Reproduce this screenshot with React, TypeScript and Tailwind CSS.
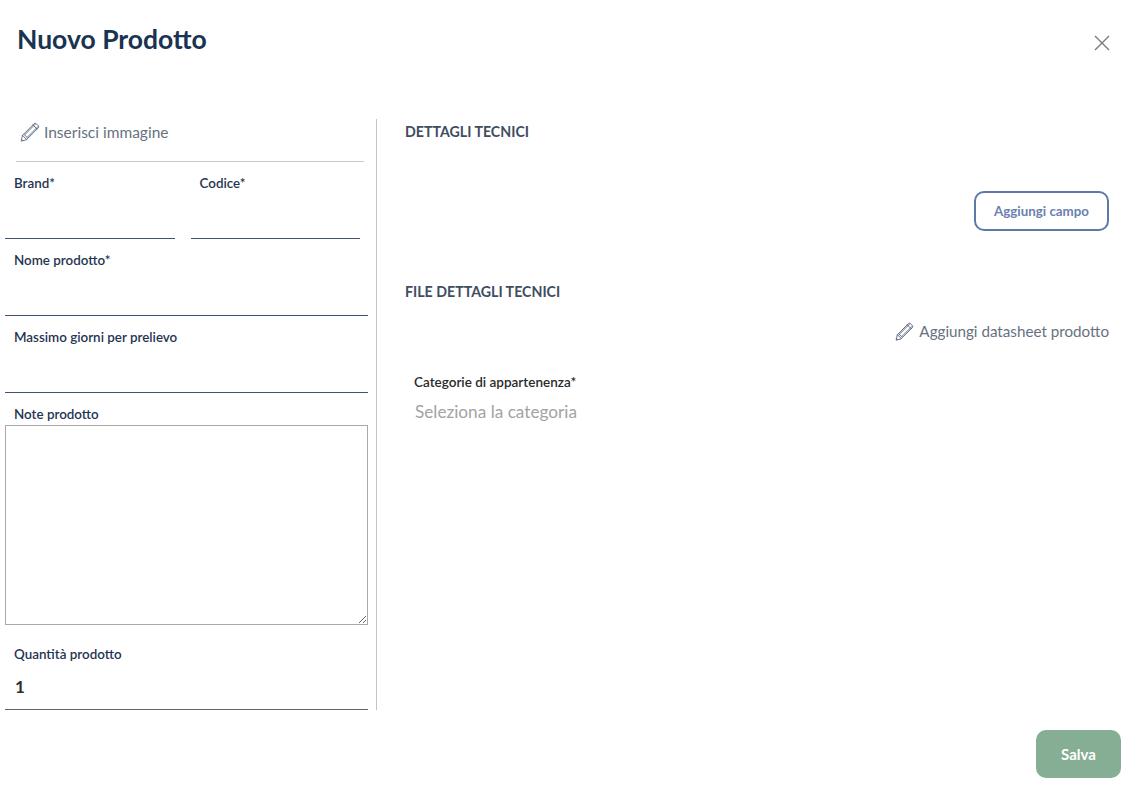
import React from "react";

function PencilIcon({ stroke = "#5d6b7d", size = 20 }: { stroke?: string; size?: number }) {
  return (
    <svg width={size} height={size} viewBox="0 0 24 24" fill="none" stroke={stroke} strokeWidth="1.1" strokeLinejoin="round" strokeLinecap="round" className="shrink-0">
      <path d="M1.5 22.5 L3 16 L17 2 Q18.2 1 19.4 2 L22 4.6 Q23 5.8 22 7 L8 21 Z" />
      <path d="M3 16 L8 21 M5.5 15.5 L8.5 18.5 M5.5 15.5 L18.6 2.4 M8.5 18.5 L21.6 5.4 M15.5 3.5 L20.5 8.5 M1.8 21 L3 22.2" />
    </svg>
  );
}

function Field({ label, className }: { label: string; className: string }) {
  return (
    <div className={className}>
      <div className="pl-[9px] h-[22px] text-[13.4px] leading-[22px] font-semibold text-[#1f3552]">{label}</div>
      <input className="block w-full h-[45px] border-b border-[#3f5270] outline-none" />
    </div>
  );
}

export default function App() {
  return (
    <div className="w-[1129px] h-[790px] bg-white overflow-hidden font-['Lato','Noto_Sans',sans-serif]">
      <header className="h-[119px] flex justify-between items-start pl-[17px] pr-[19px]">
        <h1 className="mt-[21px] text-[26.5px] leading-[36px] font-bold text-[#1a3350]">Nuovo Prodotto</h1>
        <svg className="mt-[35px]" width="16" height="16" viewBox="0 0 16 16" stroke="#757b80" strokeWidth="1.4" fill="none">
          <path d="M1 1 L15 15 M15 1 L1 15" />
        </svg>
      </header>

      <main className="flex h-[591px]">
        <section className="w-[377px] shrink-0 border-r border-[#c4c4c4] pl-[5px] pr-[8px]">
          <div className="ml-[11px] mr-[4px] h-[43px] border-b border-[#c8c8c8] flex items-start gap-[4px] pl-[4px] pt-[3px] text-[15.5px] leading-[20px] text-[#66727f]">
            <PencilIcon />
            <span>Inserisci immagine</span>
          </div>
          <div className="flex gap-[16px] mr-[8px] pt-[10px]">
            <Field label="Brand*" className="flex-1" />
            <Field label="Codice*" className="flex-1" />
          </div>
          <Field label="Nome prodotto*" className="mt-[10px]" />
          <Field label="Massimo giorni per prelievo" className="mt-[10px]" />
          <div className="pl-[9px] mt-[10px] h-[22px] text-[13.4px] leading-[22px] font-semibold text-[#1f3552]">Note prodotto</div>
          <textarea className="block w-full h-[200px] border border-[#a9a9a9] outline-none" />
          <div className="pl-[9px] mt-[18px] h-[22px] text-[13.4px] leading-[22px] font-semibold text-[#1f3552]">Quantità prodotto</div>
          <div className="h-[45px] pl-[10px] pt-[11px] border-b border-[#5b6770] text-[17px] leading-[22px] font-bold text-[#2c2c2c]">1</div>
        </section>

        <section className="flex-1 pl-[28px] pr-[20px]">
          <h2 className="pt-[3px] text-[14.2px] leading-[20px] font-bold text-[#3f4d5f]">DETTAGLI TECNICI</h2>
          <div className="flex justify-end mt-[49px]">
            <button className="w-[135px] h-[40px] pt-[1px] border-2 border-[#5f78ab] rounded-[10px] text-[13.3px] font-bold text-[#6a80b0]">Aggiungi campo</button>
          </div>
          <h2 className="mt-[51px] text-[14.2px] leading-[20px] font-bold text-[#3f4d5f]">FILE DETTAGLI TECNICI</h2>
          <div className="flex justify-end items-center gap-[5px] mt-[19px] h-[20px] text-[15.2px] text-[#66727f]">
            <PencilIcon stroke="#4f5d70" size={19} />
            <span>Aggiungi datasheet prodotto</span>
          </div>
          <div className="pl-[9px] mt-[31px] text-[13.5px] leading-[20px] font-semibold text-[#2a2a2a]">Categorie di appartenenza*</div>
          <div className="pl-[10px] mt-[9px] text-[17.2px] leading-[22px] text-[#a3a3a3]">Seleziona la categoria</div>
        </section>
      </main>

      <footer className="flex justify-end pr-[8px] pt-[20px]">
        <button className="w-[85px] h-[48px] rounded-[10px] bg-[#86ae94] text-white text-[15px] font-bold">Salva</button>
      </footer>
    </div>
  );
}
